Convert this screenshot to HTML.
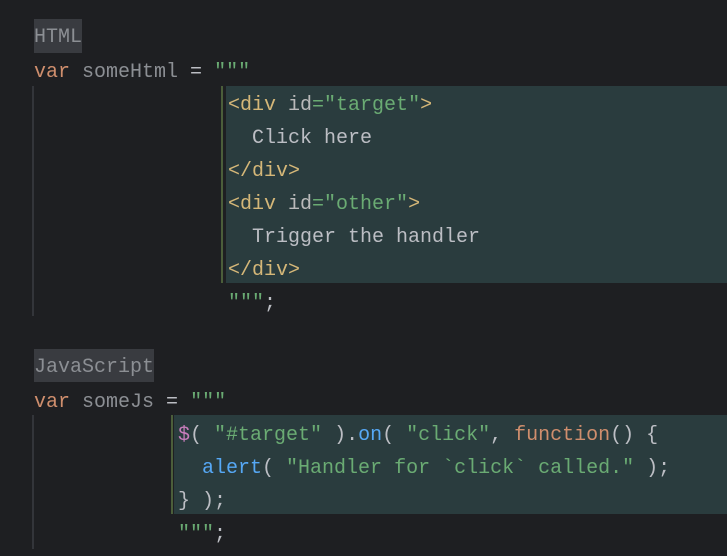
<!DOCTYPE html>
<html><head><style>
body{margin:0;width:727px;height:556px;background:#1e1f22;overflow:hidden;position:relative;font-family:"Liberation Mono",monospace;font-size:20px;}
.l{position:absolute;height:33px;line-height:33px;white-space:pre;color:#bcbec4;}
.k{color:#cf8e6d}.g{color:#8c8f94}.s{color:#6aab73}.t{color:#d5b778}.a{color:#bababa}.b{color:#56a8f5}.p{color:#c77dbb}
.lab{background:#393b40;color:#8c8f94;}
.bg{position:absolute;background:#2a3c3e;}
.v{position:absolute;width:2px;background:#33353a;}
.gb{position:absolute;width:2px;background:#4b5e3a;}
</style></head><body>
<div class="v" style="left:32px;top:86px;height:230px"></div>
<div class="v" style="left:32px;top:415px;height:134px"></div>
<div class="bg" style="left:226px;top:86px;width:501px;height:197px"></div>
<div class="gb" style="left:221px;top:86px;height:197px"></div>
<div class="bg" style="left:174px;top:415px;width:553px;height:99px"></div>
<div class="gb" style="left:171px;top:415px;height:99px"></div>

<div class="l" style="left:34px;top:19px;line-height:37px;height:34px"><span class="lab" style="display:inline-block;height:34px">HTML</span></div>
<div class="l" style="left:34px;top:56px"><span class="k">var</span> <span class="g">someHtml</span> = <span class="s">"""</span></div>
<div class="l" style="left:228px;top:89px"><span class="t">&lt;div</span> <span class="a">id</span><span class="s">="target"</span><span class="t">&gt;</span></div>
<div class="l" style="left:228px;top:122px">  Click here</div>
<div class="l" style="left:228px;top:155px"><span class="t">&lt;/div&gt;</span></div>
<div class="l" style="left:228px;top:188px"><span class="t">&lt;div</span> <span class="a">id</span><span class="s">="other"</span><span class="t">&gt;</span></div>
<div class="l" style="left:228px;top:221px">  Trigger the handler</div>
<div class="l" style="left:228px;top:254px"><span class="t">&lt;/div&gt;</span></div>
<div class="l" style="left:228px;top:287px"><span class="s">"""</span>;</div>

<div class="l" style="left:34px;top:349px;line-height:37px;height:33px"><span class="lab" style="display:inline-block;height:33px">JavaScript</span></div>
<div class="l" style="left:34px;top:386px"><span class="k">var</span> <span class="g">someJs</span> = <span class="s">"""</span></div>
<div class="l" style="left:178px;top:419px"><span class="p">$</span>( <span class="s">"#target"</span> ).<span class="b">on</span>( <span class="s">"click"</span>, <span class="k">function</span>() {</div>
<div class="l" style="left:178px;top:452px">  <span class="b">alert</span>( <span class="s">"Handler for `click` called."</span> );</div>
<div class="l" style="left:178px;top:485px">} );</div>
<div class="l" style="left:178px;top:518px"><span class="s">"""</span>;</div>
</body></html>
